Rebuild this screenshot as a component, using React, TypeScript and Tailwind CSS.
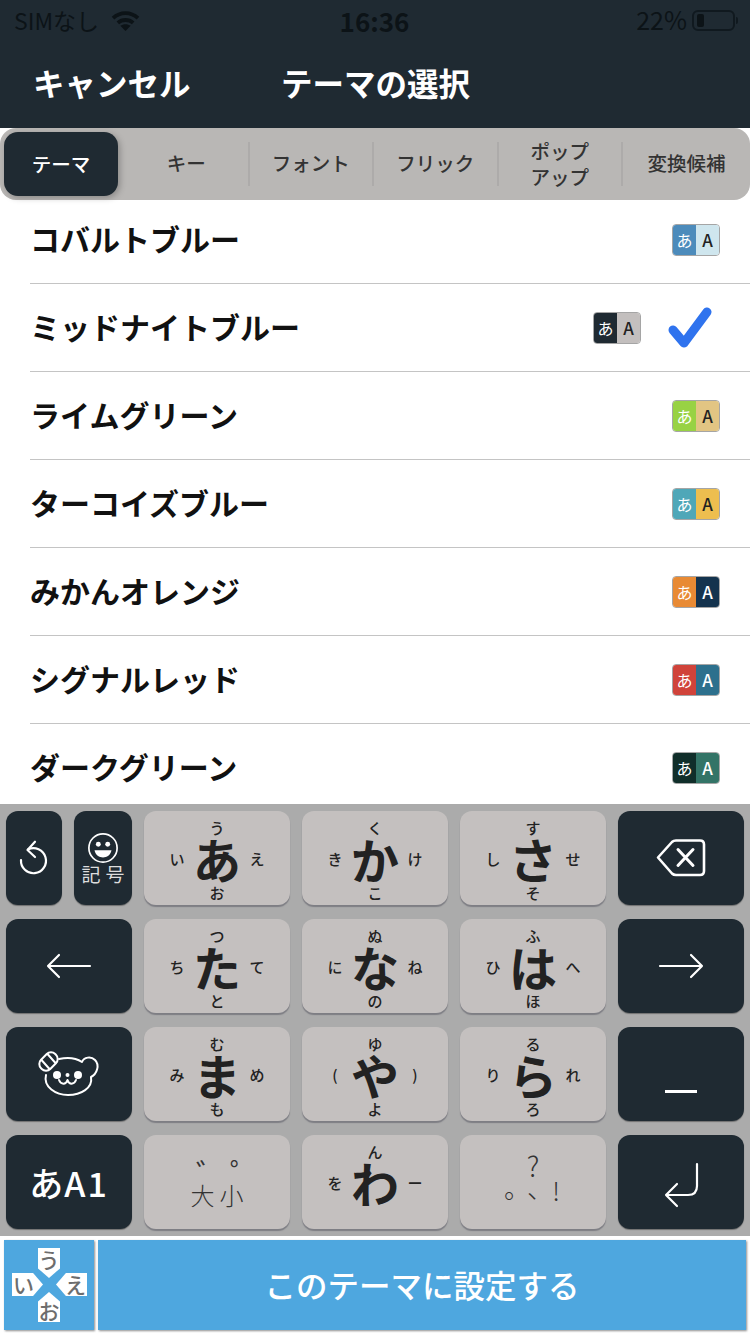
import { ReactNode } from "react";

const FONT = "font-['Noto_Sans_CJK_JP','Noto_Sans',sans-serif]";

type Theme = { name: string; left: string; right: string; selected?: boolean };

const themes: Theme[] = [
  { name: "コバルトブルー", left: "bg-[#4c8bbb]", right: "bg-[#cfe6ee] text-[#222]" },
  { name: "ミッドナイトブルー", left: "bg-[#1f2a32]", right: "bg-[#c3bfbe] text-[#222]", selected: true },
  { name: "ライムグリーン", left: "bg-[#98d244]", right: "bg-[#e2c583] text-[#222]" },
  { name: "ターコイズブルー", left: "bg-[#4fa7b8]", right: "bg-[#edbe4f] text-[#222]" },
  { name: "みかんオレンジ", left: "bg-[#e88a34]", right: "bg-[#14334e] text-white" },
  { name: "シグナルレッド", left: "bg-[#d0433a]", right: "bg-[#2d708d] text-white" },
  { name: "ダークグリーン", left: "bg-[#102e2a]", right: "bg-[#337467] text-white" },
];

const tabs = ["キー", "フォント", "フリック", "ポップ\nアップ", "変換候補"];

function StatusBar() {
  return (
    <div className="flex h-[40px] items-center justify-between pl-[14px] pr-[12px] text-[#0c1317]">
      <div className="flex w-[197px] items-center gap-[12px] text-[23px]">
        <span>SIMなし</span>
        <svg width="29" height="23" viewBox="0 0 30 24" fill="none" stroke="#0c1317" strokeWidth="4">
          <path d="M2 9.5C9.5 2.5 20.5 2.5 28 9.5" />
          <path d="M7 14.5C11.5 10.5 18.5 10.5 23 14.5" />
          <path d="M15 23l-5.4-5.4c3-2.4 7.8-2.4 10.8 0z" fill="#0c1317" stroke="none" />
        </svg>
      </div>
      <span className="text-[26px] font-bold">16:36</span>
      <div className="flex w-[200px] items-center justify-end text-[25px]">
        <span className="mr-[5px]">22%</span>
        <div className="flex h-[21px] w-[43px] items-center rounded-[6px] border-2 border-[#10191f] px-[3px]">
          <div className="h-[13px] w-[7px] rounded-[2px] bg-[#0c1317]" />
        </div>
        <div className="ml-[1px] h-[7px] w-[2px] rounded-r-[2px] bg-[#10191f]" />
      </div>
    </div>
  );
}

function Header() {
  return (
    <header className="h-[128px] shrink-0 bg-[#1f2a32]">
      <StatusBar />
      <div className="flex h-[88px] items-center pb-[2px] text-[31.5px] font-bold text-white">
        <span className="ml-[33px] w-[248px]">キャンセル</span>
        <span>テーマの選択</span>
      </div>
    </header>
  );
}

function TabBar() {
  return (
    <nav className="relative z-10 flex h-[72px] shrink-0 items-center rounded-[16px] bg-[#b9b7b5] text-[19.5px] font-medium text-[#333]">
      <div className="ml-[4px] mr-[7px] flex h-[64px] w-[114px] items-center justify-center rounded-[14px] bg-[#1f2a32] pb-[1px] text-white shadow-[2px_2px_6px_rgba(0,0,0,0.25)]">
        テーマ
      </div>
      {tabs.map((tab, i) => (
        <div
          key={tab}
          className={`flex h-[44px] items-center justify-center whitespace-pre-line text-center leading-[26px] ${
            i < 4 ? "w-[124.5px] border-r-2 border-[#adabaa]" : "flex-1"
          } ${tab.includes("\n") ? "" : "pb-[2px]"}`}
        >
          {tab}
        </div>
      ))}
    </nav>
  );
}

function Swatch({ theme }: { theme: Theme }) {
  return (
    <div className="mt-[2px] flex h-[32px] w-[48px] overflow-hidden rounded-[4px] border border-[#a5a5a5]">
      <div className={`flex flex-1 items-center justify-center text-[16px] text-white ${theme.left}`}>あ</div>
      <div className={`flex flex-1 items-center justify-center text-[17px] font-medium ${theme.right}`}>A</div>
    </div>
  );
}

function ThemeList() {
  return (
    <div className="-mt-[4px] h-[608px] shrink-0 overflow-hidden bg-white">
      {themes.map((theme) => (
        <div key={theme.name} className="ml-[30px] flex h-[88px] items-center border-b border-[#c4c4c4] pb-[1px]">
          <span className="flex-1 pb-[2px] text-[30px] font-bold text-[#111]">{theme.name}</span>
          {theme.selected ? (
            <>
              <Swatch theme={theme} />
              <svg className="ml-[26px] mr-[37px] mt-[2px]" width="46" height="44" viewBox="0 0 46 44">
                <path d="M6 24L17 37L40 6" fill="none" stroke="#2f73ee" strokeWidth="9" strokeLinecap="round" strokeLinejoin="round" />
              </svg>
            </>
          ) : (
            <div className="mr-[30px]">
              <Swatch theme={theme} />
            </div>
          )}
        </div>
      ))}
    </div>
  );
}

function DarkKey({ children, className = "" }: { children: ReactNode; className?: string }) {
  return (
    <div className={`flex h-[94px] items-center justify-center rounded-[12px] bg-[#1f2a32] text-white shadow-[0_1px_1px_rgba(0,0,0,0.35)] ${className}`}>
      {children}
    </div>
  );
}

type Flick = { main: string; top: string; left: string; right: string; bottom: string };

const flicks: Flick[] = [
  { main: "あ", top: "う", left: "い", right: "え", bottom: "お" },
  { main: "か", top: "く", left: "き", right: "け", bottom: "こ" },
  { main: "さ", top: "す", left: "し", right: "せ", bottom: "そ" },
  { main: "た", top: "つ", left: "ち", right: "て", bottom: "と" },
  { main: "な", top: "ぬ", left: "に", right: "ね", bottom: "の" },
  { main: "は", top: "ふ", left: "ひ", right: "へ", bottom: "ほ" },
  { main: "ま", top: "む", left: "み", right: "め", bottom: "も" },
  { main: "や", top: "ゆ", left: "(", right: ")", bottom: "よ" },
  { main: "ら", top: "る", left: "り", right: "れ", bottom: "ろ" },
  { main: "わ", top: "ん", left: "を", right: "ー", bottom: "" },
];

function LightKey({ children }: { children: ReactNode }) {
  return (
    <div className="h-[94px] rounded-[12px] bg-[#c4c0bf] text-[#222] shadow-[0_2px_1px_rgba(90,90,100,0.55)]">
      {children}
    </div>
  );
}

function FlickKey({ flick }: { flick: Flick }) {
  return (
    <LightKey>
      <div className="grid h-full grid-cols-[66px_14px_66px] grid-rows-[32px_30px_32px] place-items-center text-[15px] font-medium leading-none">
        <span />
        <span>{flick.top}</span>
        <span />
        <span>{flick.left}</span>
        <span className="text-[48px] font-bold">{flick.main}</span>
        <span>{flick.right}</span>
        <span />
        <span className="pt-[6px]">{flick.bottom}</span>
        <span />
      </div>
    </LightKey>
  );
}

function UndoIcon() {
  return (
    <svg width="32" height="36" viewBox="0 0 32 36" fill="none" stroke="white" strokeWidth="2.2" strokeLinecap="round" strokeLinejoin="round">
      <path d="M10 9.5A12.5 12.5 0 1 1 3 20" />
      <path d="M17 1.7L9.5 10L17 17" />
    </svg>
  );
}

function BearIcon() {
  return (
    <svg width="62" height="46" viewBox="0 0 62 46" fill="none" stroke="white" strokeWidth="2" strokeLinecap="round" strokeLinejoin="round">
      <path d="M8 24C5 36 18 44 30 44C43 44 55 37 53 26C59 23 62 14 57 9C53 5 46 6 44 11C38 7 30 6 21 8" />
      <rect x="0.5" y="4" width="20" height="13" rx="6" transform="rotate(-45 10.5 10.5)" fill="#1f2a32" />
      <path d="M3.5 9L11.5 18M9.5 3L17.5 12" />
      <circle cx="19" cy="24" r="4" fill="white" stroke="none" />
      <circle cx="40" cy="24" r="4" fill="white" stroke="none" />
      <circle cx="29.5" cy="24" r="2" fill="white" stroke="none" />
      <path d="M21 29C23 34 28 34 29.5 29C31 34 36 34 38 29" />
    </svg>
  );
}

function Keyboard() {
  return (
    <div className="grid shrink-0 grid-cols-[126px_146px_146px_146px_126px] grid-rows-[94px_94px_94px_94px] gap-x-[12px] gap-y-[14px] bg-[#ababab] px-[6px] pb-[7px] pt-[7px]">
      <div className="flex gap-[12px]">
        <DarkKey className="w-[56px]">
          <UndoIcon />
        </DarkKey>
        <DarkKey className="w-[58px] flex-col">
          <svg width="32" height="32" viewBox="0 0 34 34" fill="none" stroke="white" strokeWidth="1.8">
            <circle cx="17" cy="17" r="15" />
            <circle cx="12" cy="13" r="2.6" fill="white" stroke="none" />
            <circle cx="22" cy="13" r="2.6" fill="white" stroke="none" />
            <path d="M8 19.5H26C25 25 21 27 17 27C13 27 9 25 8 19.5Z" fill="white" stroke="none" />
          </svg>
          <span className="-mr-[5px] text-[19px] leading-[20px] tracking-[5px] text-[#ddd]">記号</span>
        </DarkKey>
      </div>
      {flicks.slice(0, 3).map((f) => (
        <FlickKey key={f.main} flick={f} />
      ))}
      <DarkKey>
        <svg width="50" height="38" viewBox="0 0 50 38" fill="none" stroke="white" strokeWidth="2.6" strokeLinejoin="round" strokeLinecap="round">
          <path d="M2 18.5L16 3C17 2 18 1.5 20 1.5H44C46.5 1.5 48 3 48 5.5V32C48 34.5 46.5 36 44 36H20C18 36 17 35.5 16 34.5Z" />
          <path d="M22 10.5L37 26.5M37 10.5L22 26.5" strokeWidth="3" />
        </svg>
      </DarkKey>

      <DarkKey>
        <svg width="46" height="26" viewBox="0 0 46 26" fill="none" stroke="white" strokeWidth="2.2" strokeLinecap="round" strokeLinejoin="round">
          <path d="M44 13H2M13 2L2 13L13 24" />
        </svg>
      </DarkKey>
      {flicks.slice(3, 6).map((f) => (
        <FlickKey key={f.main} flick={f} />
      ))}
      <DarkKey>
        <svg width="46" height="26" viewBox="0 0 46 26" fill="none" stroke="white" strokeWidth="2.2" strokeLinecap="round" strokeLinejoin="round">
          <path d="M2 13H44M33 2L44 13L33 24" />
        </svg>
      </DarkKey>

      <DarkKey>
        <BearIcon />
      </DarkKey>
      {flicks.slice(6, 9).map((f) => (
        <FlickKey key={f.main} flick={f} />
      ))}
      <DarkKey className="items-end pb-[28px]">
        <div className="h-[3px] w-[32px] bg-white" />
      </DarkKey>

      <DarkKey className="gap-[1px] text-[34px] font-medium">
        <span>あ</span>
        <span className="tracking-[2px]">A1</span>
      </DarkKey>
      <LightKey>
        <div className="grid h-full grid-cols-2 grid-rows-[22px_32px] px-[44px] pt-[22px] text-center text-[#333]">
          <span className="translate-x-[8px] text-[30px] leading-[30px]">゛</span>
          <span className="translate-x-[13px] text-[30px] leading-[30px]">゜</span>
          <span className="text-[24px] font-light leading-[32px]">大</span>
          <span className="text-[24px] font-light leading-[32px]">小</span>
        </div>
      </LightKey>
      <FlickKey flick={flicks[9]} />
      <LightKey>
        <div className="flex h-full flex-col items-center pt-[14px] font-light text-[#333]">
          <span className="text-[28px] leading-[32px]">?</span>
          <div className="flex text-[26px] leading-[26px]">
            <span className="flex w-[23px] translate-x-[7px] -translate-y-[7px] justify-center">。</span>
            <span className="flex w-[23px] translate-x-[7px] -translate-y-[7px] justify-center">、</span>
            <span className="flex w-[23px] -translate-y-[4px] justify-center">!</span>
          </div>
        </div>
      </LightKey>
      <DarkKey>
        <svg width="36" height="46" viewBox="0 0 36 46" fill="none" stroke="white" strokeWidth="2.2" strokeLinecap="round" strokeLinejoin="round" className="mt-[6px]">
          <path d="M34 2V24C34 30 31 33 25 33H3M14 22L3 33L14 44" />
        </svg>
      </DarkKey>
    </div>
  );
}

function FlickGuide() {
  const tile = "absolute flex bg-white text-[21px] font-medium leading-none text-[#6d6d6d]";
  return (
    <div className="relative h-[90px] w-[90px] bg-[#4ea7df] shadow-[1px_1px_2px_rgba(0,0,0,0.45)]">
      <span className={`${tile} left-[34px] top-[8px] h-[30px] w-[22px] justify-center pt-[1px] [clip-path:polygon(0_0,100%_0,100%_68%,50%_100%,0_68%)]`}>う</span>
      <span className={`${tile} left-[8px] top-[33px] h-[23px] w-[31px] items-center pl-[1px] [clip-path:polygon(0_0,68%_0,100%_50%,68%_100%,0_100%)]`}>い</span>
      <span className={`${tile} left-[52px] top-[33px] h-[23px] w-[31px] items-center justify-end pr-[1px] [clip-path:polygon(32%_0,100%_0,100%_100%,32%_100%,0_50%)]`}>え</span>
      <span className={`${tile} left-[34px] top-[52px] h-[30px] w-[22px] items-end justify-center pb-[1px] [clip-path:polygon(50%_0,100%_32%,100%_100%,0_100%,0_32%)]`}>お</span>
    </div>
  );
}

function BottomBar() {
  return (
    <div className="flex h-[98px] shrink-0 gap-[4px] bg-white pl-[4px] pr-[4px] pt-[4px]">
      <FlickGuide />
      <div className="flex h-[90px] flex-1 items-center justify-center bg-[#4ea7df] text-[31.5px] font-medium text-white shadow-[1px_1px_2px_rgba(0,0,0,0.45)]">
        このテーマに設定する
      </div>
    </div>
  );
}

export default function App() {
  return (
    <div className={`flex h-[1334px] w-[750px] flex-col overflow-hidden bg-white ${FONT}`}>
      <Header />
      <TabBar />
      <ThemeList />
      <Keyboard />
      <BottomBar />
    </div>
  );
}
